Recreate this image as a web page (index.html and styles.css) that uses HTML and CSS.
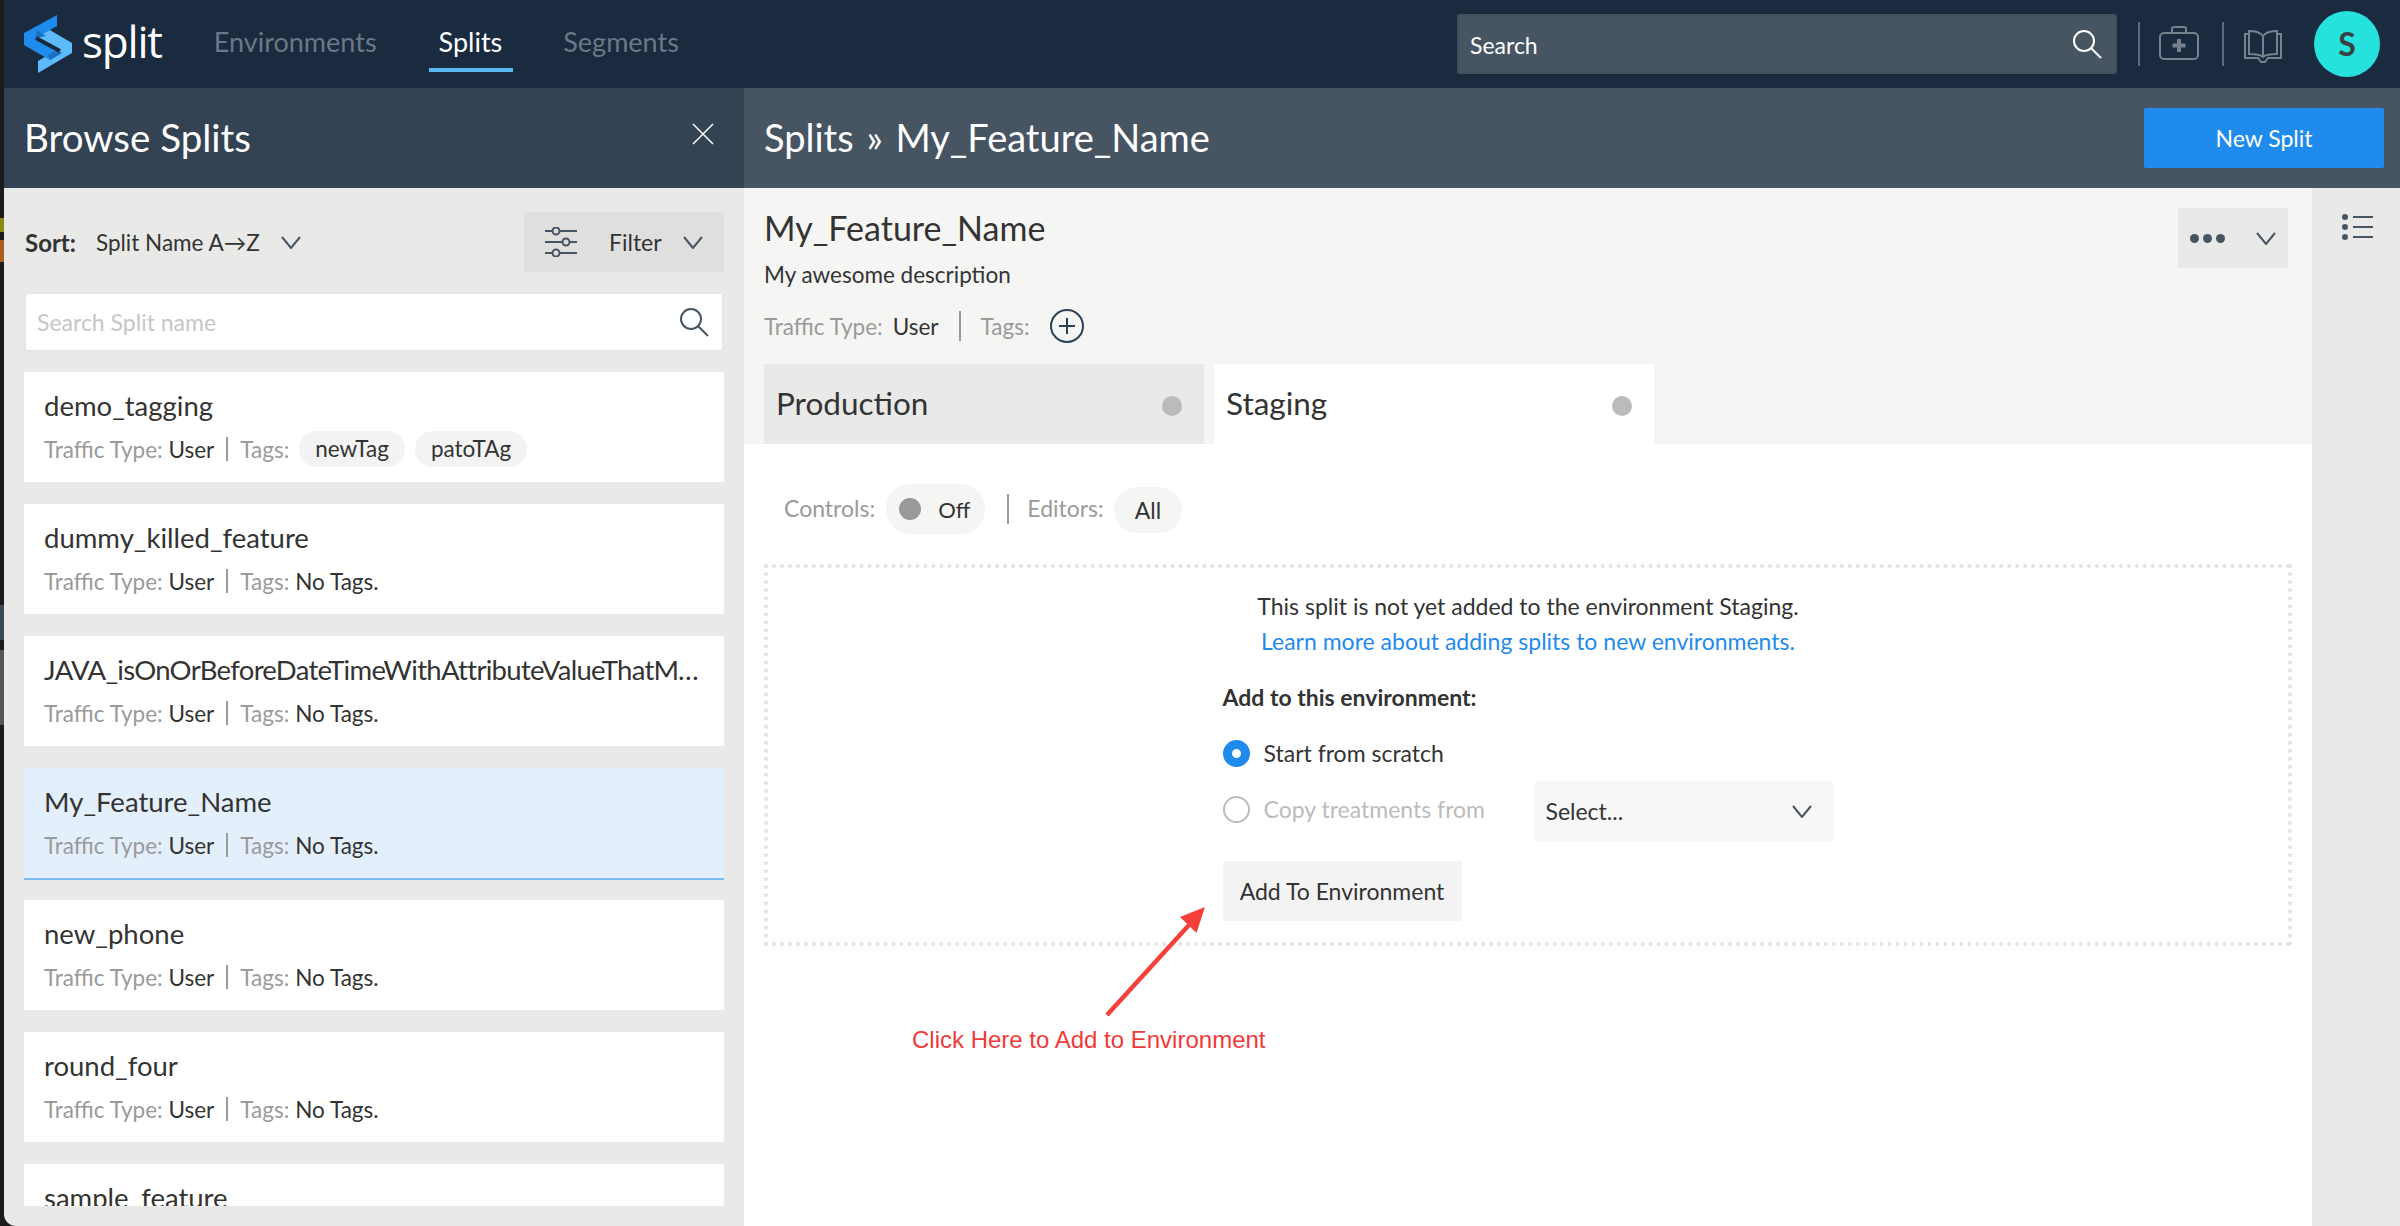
FILE: index.html

```html
<!DOCTYPE html>
<html lang="en">
<head>
    <meta charset="UTF-8">
    <title>Splits - My_Feature_Name</title>
    <link rel="stylesheet" href="styles.css">
</head>
<body>
    <nav class="topbar">
        <a class="logo">
            <svg class="logo-mark" width="48" height="58" viewBox="24 14 48 58">
                <polygon points="43,25 72,42 72,52 38,72 38,60 55,50 37,39" fill="#5dbbfb"/>
                <polygon points="57,14 57,25 36,37 62,52 50,59 24,44 24,32" fill="#1f8bec"/>
                <polygon points="37,29 46,35 36,37" fill="#1b6fc0"/>
                <polygon points="50,59 62,52 55,50 48,54" fill="#1b6fc0"/>
                <line x1="36" y1="37" x2="60" y2="50" stroke="#1a2b3f" stroke-width="4"/>
            </svg>
            <span class="logo-text">split</span>
        </a>
        <a class="nav-link nav-env">Environments</a>
        <a class="nav-link nav-active">Splits</a>
        <a class="nav-link nav-seg">Segments</a>
        <div class="global-search">
            <span class="global-search-text">Search</span>
            <svg class="icon-search" viewBox="0 0 30 30" fill="none" stroke="#fff" stroke-width="2">
                <circle cx="12" cy="12" r="10"/><line x1="19" y1="19" x2="29" y2="29"/>
            </svg>
        </div>
        <span class="nav-sep sep-first"></span>
        <svg class="icon-case" width="40" height="34" viewBox="0 0 40 34" fill="none" stroke="#76818d" stroke-width="2">
            <rect x="1" y="7" width="38" height="26" rx="4"/>
            <path d="M13 7V3a2 2 0 0 1 2-2h10a2 2 0 0 1 2 2v4"/>
            <path d="M20 13v13M13.500 19.500h13" stroke-width="4"/>
        </svg>
        <span class="nav-sep sep-second"></span>
        <svg class="icon-book" width="38" height="34" viewBox="0 0 38 34" fill="none" stroke="#76818d" stroke-width="2">
            <path d="M5 4H1v24h13l3 4h4l3-4h13V4h-4"/>
            <path d="M19 6c-3-4-9-5-14-5v23c5 0 11 0 14 3 3-3 9-3 14-3V1c-5 0-11 1-14 5zM19 6v21"/>
        </svg>
        <div class="avatar">S</div>
    </nav>

    <div class="workspace">
        <aside class="sidebar">
            <div class="sidebar-head">
                <h2>Browse Splits</h2>
                <svg class="icon-close" viewBox="0 0 22 22" stroke="#fff" stroke-width="1.500"><path d="M1 1l20 20M21 1L1 21"/></svg>
            </div>
            <div class="sort-row">
                <b>Sort:</b>
                <span class="sort-value">Split Name A→Z</span>
                <svg class="chevron" viewBox="0 0 20 13" fill="none"><path d="M1 1l9 11 9-11"/></svg>
                <div class="filter-btn">
                    <svg width="32" height="30" viewBox="0 0 32 30" fill="none" stroke="#475563" stroke-width="2">
                        <path d="M0 4h7M15 4h17M0 15h17M25 15h7M0 26h7M15 26h17"/>
                        <circle cx="11" cy="4" r="3.500"/><circle cx="21" cy="15" r="3.500"/><circle cx="11" cy="26" r="3.500"/>
                    </svg>
                    <span>Filter</span>
                    <svg class="chevron" viewBox="0 0 20 13" fill="none"><path d="M1 1l9 11 9-11"/></svg>
                </div>
            </div>
            <div class="split-search">
                <span>Search Split name</span>
                <svg class="icon-search" viewBox="0 0 30 30" fill="none" stroke="#475563" stroke-width="2">
                    <circle cx="12" cy="12" r="10"/><line x1="19" y1="19" x2="29" y2="29"/>
                </svg>
            </div>
            <div class="split-list">
                <div class="split-card">
                    <div class="card-title">demo_tagging</div>
                    <div class="card-meta"><span class="muted">Traffic Type:</span> User<i class="bar"></i><span class="muted">Tags:</span><span class="tag">newTag</span><span class="tag">patoTAg</span></div>
                </div>
                <div class="split-card">
                    <div class="card-title">dummy_killed_feature</div>
                    <div class="card-meta"><span class="muted">Traffic Type:</span> User<i class="bar"></i><span class="muted">Tags:</span><span class="no-tags">No Tags.</span></div>
                </div>
                <div class="split-card">
                    <div class="card-title long-name">JAVA_isOnOrBeforeDateTimeWithAttributeValueThatMatches</div>
                    <div class="card-meta"><span class="muted">Traffic Type:</span> User<i class="bar"></i><span class="muted">Tags:</span><span class="no-tags">No Tags.</span></div>
                </div>
                <div class="split-card selected">
                    <div class="card-title">My_Feature_Name</div>
                    <div class="card-meta"><span class="muted">Traffic Type:</span> User<i class="bar"></i><span class="muted">Tags:</span><span class="no-tags">No Tags.</span></div>
                </div>
                <div class="split-card">
                    <div class="card-title">new_phone</div>
                    <div class="card-meta"><span class="muted">Traffic Type:</span> User<i class="bar"></i><span class="muted">Tags:</span><span class="no-tags">No Tags.</span></div>
                </div>
                <div class="split-card">
                    <div class="card-title">round_four</div>
                    <div class="card-meta"><span class="muted">Traffic Type:</span> User<i class="bar"></i><span class="muted">Tags:</span><span class="no-tags">No Tags.</span></div>
                </div>
                <div class="split-card">
                    <div class="card-title">sample_feature</div>
                </div>
            </div>
        </aside>

        <main class="main">
            <div class="main-head">
                <h2>Splits » My_Feature_Name</h2>
                <button class="btn-new">New Split</button>
            </div>
            <div class="main-body">
                <div class="content">
                    <section class="split-head">
                        <div class="head-top">
                            <div>
                                <h1>My_Feature_Name</h1>
                                <p class="desc">My awesome description</p>
                                <div class="head-meta">
                                    <span class="muted">Traffic Type:</span><span class="head-user">User</span><i class="bar"></i><span class="muted">Tags:</span>
                                    <svg class="icon-plus" viewBox="0 0 34 34" fill="none" stroke="#2c4058" stroke-width="2"><circle cx="17" cy="17" r="16"/><path d="M17 9v16M9 17h16"/></svg>
                                </div>
                            </div>
                            <div class="more-btn">
                                <span class="dots"><i></i><i></i><i></i></span>
                                <svg class="chevron" viewBox="0 0 20 13" fill="none"><path d="M1 1l9 11 9-11"/></svg>
                            </div>
                        </div>
                        <div class="tabs">
                            <div class="tab"><span class="tab-name">Production</span><span class="tab-dot"></span></div>
                            <div class="tab tab-active"><span class="tab-name">Staging</span><span class="tab-dot"></span></div>
                        </div>
                    </section>
                    <section class="panel">
                        <div class="controls">
                            <span class="muted">Controls:</span>
                            <span class="pill pill-off"><i class="off-dot"></i>Off</span>
                            <i class="bar"></i>
                            <span class="muted">Editors:</span>
                            <span class="pill pill-all">All</span>
                        </div>
                        <div class="add-box">
                            <p>This split is not yet added to the environment Staging.</p>
                            <p><a class="link">Learn more about adding splits to new environments.</a></p>
                            <div class="add-form">
                                <div class="form-title">Add to this environment:</div>
                                <div class="radio-row"><i class="radio radio-on"></i>Start from scratch</div>
                                <div class="radio-row disabled">
                                    <i class="radio"></i><span class="copy-label">Copy treatments from</span>
                                    <div class="select">Select...<svg class="chevron" viewBox="0 0 20 13" fill="none"><path d="M1 1l9 11 9-11"/></svg></div>
                                </div>
                                <button class="btn-add">Add To Environment</button>
                            </div>
                        </div>
                    </section>
                </div>
                <div class="rail">
                    <svg width="31" height="26" viewBox="0 0 31 26" fill="#475563">
                        <circle cx="3" cy="3" r="3"/><circle cx="3" cy="13" r="3"/><circle cx="3" cy="23" r="3"/>
                        <rect x="11" y="2" width="20" height="2"/><rect x="11" y="12" width="20" height="2"/><rect x="11" y="22" width="20" height="2"/>
                    </svg>
                </div>
            </div>
        </main>
    </div>

    <!-- red annotation drawn on top of the screenshot -->
    <svg class="note-arrow" width="110" height="120" viewBox="0 0 110 120">
        <line x1="4" y1="116" x2="86" y2="26" stroke="#f43f3b" stroke-width="4.500"/>
        <polygon points="102,8 77,18 93.500,34" fill="#f43f3b"/>
    </svg>
    <div class="note-text">Click Here to Add to Environment</div>
</body>
</html>
```

FILE: styles.css

```css
* {
    box-sizing: border-box;
}

html, body {
    margin: 0;
    height: 100%;
}

body {
    width: 2400px;
    height: 1226px;
    overflow: hidden;
    padding-left: 4px;
    /* what shows of the desktop behind the window */
    background: #1c1c1c linear-gradient(to bottom,
        #1c1c1c 218px, #8a8a12 218px, #8a8a12 232px, #1c1c1c 232px,
        #1c1c1c 240px, #a8601c 240px, #a8601c 262px, #1c1c1c 262px,
        #1c1c1c 605px, #3d4858 605px, #3d4858 640px, #1c1c1c 640px,
        #1c1c1c 650px, #555 650px, #555 725px, #1c1c1c 725px) no-repeat;
    display: flex;
    flex-direction: column;
    font-family: "Lato", "Noto Sans", sans-serif;
    font-size: 23px;
    color: #333;
}

h1, h2, p {
    margin: 0;
    font-weight: 400;
}

i {
    font-style: normal;
}

svg {
    flex: none;
    display: block;
}

/* top bar */
.topbar {
    height: 88px;
    flex: none;
    padding-right: 20px;
    background: #1a2b3f;
    display: flex;
    align-items: center;
    color: #fff;
}

.logo {
    display: flex;
    align-items: center;
    margin-left: 20px;
}

.logo-text {
    font-family: "Open Sans", sans-serif;
    font-size: 44px;
    letter-spacing: -1.200px;
    margin-left: 10px;
    line-height: 1;
    margin-top: -6px;
}

.nav-link {
    font-size: 27px;
    color: #6b7886;
    height: 72px;
    line-height: 84px;
    margin-top: -16px;
}

.nav-env {
    margin-left: 52px;
}

.nav-active {
    color: #fff;
    margin-left: 52px;
    padding: 0 11px 0 10px;
    border-bottom: 4px solid #5ab8f5;
}

.nav-seg {
    margin-left: 50px;
}

.global-search {
    margin-left: auto;
    width: 660px;
    height: 60px;
    background: #475563;
    border: 2px solid #424f5d;
    border-radius: 3px;
    display: flex;
    align-items: center;
    justify-content: space-between;
    padding: 0 13px 0 11px;
}

.global-search-text {
    margin-top: 2px;
}

.icon-search {
    width: 30px;
    height: 30px;
}

.nav-sep {
    width: 2px;
    height: 44px;
    background: #5d6a78;
}

.sep-first {
    margin: 0 19px 0 21px;
}

.sep-second {
    margin: 0 20px 0 23px;
}

.icon-case {
    margin-top: -3px;
}

.icon-book {
    margin-top: 5px;
}

.avatar {
    width: 66px;
    height: 66px;
    border-radius: 50%;
    background: #25e3dc;
    color: #3a3f44;
    font-size: 32px;
    font-weight: 700;
    text-align: center;
    line-height: 66px;
    margin-left: 32px;
}

/* two columns */
.workspace {
    flex: 1;
    display: flex;
    min-height: 0;
}

.sidebar {
    width: 740px;
    flex: none;
    background: #e9e9e8;
    display: flex;
    flex-direction: column;
    border-bottom-left-radius: 12px;
}

.sidebar-head {
    height: 100px;
    flex: none;
    background: #334354;
    color: #fff;
    display: flex;
    align-items: center;
    justify-content: space-between;
    padding: 0 30px 0 20px;
}

.sidebar-head h2 {
    font-size: 38.500px;
    margin-top: -2px;
}

.icon-close {
    width: 22px;
    height: 22px;
    margin-top: -8px;
}

.sort-row {
    display: flex;
    align-items: center;
    margin: 24px 20px 0 21px;
}

.sort-row b {
    font-size: 24px;
}

.sort-value {
    margin-left: 20px;
    font-size: 22.500px;
}

.chevron {
    width: 20px;
    height: 13px;
    stroke: #475563;
    stroke-width: 2;
}

.sort-row > .chevron {
    margin-left: 21px;
}

.filter-btn {
    margin-left: auto;
    width: 200px;
    height: 60px;
    background: #dfdfde;
    border-radius: 4px;
    display: flex;
    align-items: center;
    padding: 0 21px;
}

.filter-btn span {
    margin-left: 32px;
    flex: 1;
}

.split-search {
    height: 56px;
    margin: 22px 22px 0;
    background: #fff;
    border-radius: 2px;
    box-shadow: 0 0 2px #d0d0d0;
    display: flex;
    align-items: center;
    justify-content: space-between;
    padding: 0 13px 0 11px;
    color: #c6c6c6;
}

.split-list {
    flex: 1;
    min-height: 0;
    overflow: hidden;
    margin: 22px 20px 20px;
}

.split-card {
    height: 110px;
    margin-bottom: 22px;
    padding: 15px 22px 0 20px;
    background: #fff;
}

.split-card.selected {
    height: 112px;
    margin-bottom: 20px;
    background: #e3effb;
    border-bottom: 2px solid #7cbcf0;
}

.card-title {
    font-size: 27.500px;
    line-height: 38px;
    white-space: nowrap;
    overflow: hidden;
    text-overflow: ellipsis;
}

.long-name {
    letter-spacing: -0.700px;
}

.card-meta {
    display: flex;
    align-items: center;
    height: 36px;
    margin-top: 6px;
    font-size: 22.500px;
    white-space: pre;
}

.muted {
    color: #9a9a9a;
}

.bar {
    width: 2px;
    height: 24px;
    background: #9a9a9a;
    margin: 0 12px;
}

.tag {
    height: 36px;
    line-height: 36px;
    padding: 0 16px;
    margin-left: 10px;
    background: #f3f3f3;
    border-radius: 18px;
}

.tag:first-of-type {
    margin-left: 6px;
}

.no-tags {
    margin-left: 6px;
    color: #333;
}

/* right side */
.main {
    flex: 1;
    display: flex;
    flex-direction: column;
    min-width: 0;
}

.main-head {
    height: 100px;
    flex: none;
    background: #475563;
    color: #fff;
    display: flex;
    align-items: center;
    justify-content: space-between;
    padding: 0 16px 0 20px;
}

.main-head h2 {
    font-size: 38px;
    word-spacing: 3px;
    margin-top: -2px;
}

.btn-new {
    width: 240px;
    height: 60px;
    border: 0;
    border-radius: 2px;
    background: #1f8bec;
    color: #fff;
    font: inherit;
}

.main-body {
    flex: 1;
    display: flex;
    min-height: 0;
}

.content {
    flex: 1;
    background: #fff;
    min-width: 0;
}

.rail {
    width: 88px;
    flex: none;
    background: #e9e9e8;
    padding: 26px 0 0 30px;
}

.split-head {
    height: 256px;
    background: #f5f5f3;
    padding: 20px 24px 0 20px;
    display: flex;
    flex-direction: column;
}

.head-top {
    display: flex;
    justify-content: space-between;
    align-items: flex-start;
}

.split-head h1 {
    font-size: 34px;
    line-height: 40px;
}

.desc {
    font-size: 22.500px;
    line-height: 32px;
    margin-top: 11px;
}

.head-meta {
    display: flex;
    align-items: center;
    height: 34px;
    margin-top: 18px;
    font-size: 22.500px;
}

.head-user {
    margin-left: 10px;
}

.head-meta .bar {
    height: 30px;
    margin: 0 20px;
}

.icon-plus {
    width: 34px;
    height: 34px;
    margin-left: 20px;
}

.more-btn {
    width: 110px;
    height: 60px;
    background: #e9e9e8;
    display: flex;
    align-items: center;
    justify-content: space-between;
    padding: 0 12px;
}

.dots {
    display: flex;
    gap: 4px;
}

.dots i {
    width: 9px;
    height: 9px;
    border-radius: 50%;
    background: #475563;
}

.tabs {
    margin-top: auto;
    display: flex;
    gap: 10px;
}

.tab {
    width: 440px;
    height: 80px;
    padding: 0 22px 0 12px;
    background: #e9e9e8;
    display: flex;
    align-items: center;
    justify-content: space-between;
    font-size: 31.500px;
}

.tab-name {
    margin-top: -3px;
}

.tab-active {
    background: #fff;
}

.tab-dot {
    width: 20px;
    height: 20px;
    margin-top: 4px;
    border-radius: 50%;
    background: #bbb;
}

.panel {
    padding: 40px 20px 0;
}

.controls {
    display: flex;
    align-items: center;
    height: 50px;
    padding-left: 20px;
}

.controls .muted {
    margin-top: -2px;
}

.controls .bar {
    height: 30px;
    margin: 0 18px 0 22px;
}

.pill {
    display: flex;
    align-items: center;
    background: #f5f5f3;
    border-radius: 24px;
}

.pill-off {
    height: 50px;
    margin-left: 11px;
    padding: 0 15px 0 13px;
    font-size: 22px;
}

.off-dot {
    width: 22px;
    height: 22px;
    border-radius: 50%;
    background: #999;
    margin-right: 17px;
}

.pill-all {
    height: 46px;
    margin-left: 10px;
    padding: 0 21px;
    margin-top: 2px;
}

.add-box {
    height: 382px;
    margin-top: 30px;
    padding-top: 21px;
    border: 4px dotted #e2e2e2;
    text-align: center;
    line-height: 35px;
}

.link {
    color: #1f8bec;
}

.add-form {
    width: 611px;
    margin: 21px auto 0;
    text-align: left;
}

.form-title {
    font-weight: 700;
    line-height: 34px;
}

.radio-row {
    display: flex;
    align-items: center;
    height: 36px;
    margin-top: 21px;
}

.radio-row.disabled {
    height: 60px;
    margin-top: 10px;
    color: #bbb;
}

.radio {
    width: 27px;
    height: 27px;
    border-radius: 50%;
    border: 2px solid #bbb;
    margin-right: 14px;
}

.radio-on {
    border: 9px solid #1f8bec;
}

.disabled .radio {
    margin-top: -4px;
}

.copy-label {
    margin-top: -4px;
}

.select {
    margin-left: auto;
    width: 300px;
    height: 60px;
    background: #f7f7f7;
    border-radius: 4px;
    color: #333;
    display: flex;
    align-items: center;
    justify-content: space-between;
    padding: 0 22px 0 12px;
}

.btn-add {
    display: block;
    width: 239px;
    height: 60px;
    margin-top: 20px;
    border: 0;
    border-radius: 2px;
    background: #f3f3f3;
    color: #333;
    font: inherit;
}

/* annotation */
.note-arrow {
    position: absolute;
    left: 1103px;
    top: 899px;
}

.note-text {
    position: absolute;
    left: 912px;
    top: 1026px;
    font-family: "Liberation Sans", sans-serif;
    font-size: 24px;
    line-height: 28px;
    color: #f03a3a;
}
```
